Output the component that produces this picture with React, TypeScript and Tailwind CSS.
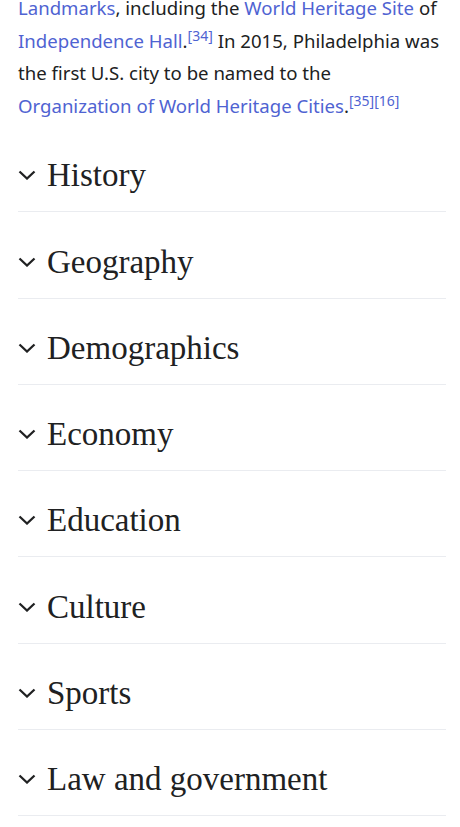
import React from "react";

const sections = [
  "History",
  "Geography",
  "Demographics",
  "Economy",
  "Education",
  "Culture",
  "Sports",
  "Law and government",
];

function Chevron() {
  return (
    <svg width="18" height="10" viewBox="0 0 18 10" className="shrink-0">
      <polyline
        points="1.5,1.5 9,8.5 16.5,1.5"
        fill="none"
        stroke="#202122"
        strokeWidth="2.3"
      />
    </svg>
  );
}

export default function App() {
  const link = "text-[#4f63d2]";
  const sup = "text-[14px] leading-none text-[#4f63d2]";
  return (
    <div className="bg-white w-[460px] h-[827px] overflow-hidden pl-[18px] pr-[14px]">
      <p
        className="-mt-[8px] text-[18.6px] leading-[32.5px] text-[#202122]"
        style={{ fontFamily: '"Noto Sans", "Open Sans", sans-serif' }}
      >
        <span className={link}>Landmarks</span>, including the{" "}
        <span className={link}>World Heritage Site</span> of{" "}
        <span className={link}>Independence Hall</span>.
        <sup className={sup}>[34]</sup> In 2015, Philadelphia was the first
        U.S. city to be named to the{" "}
        <span className={link}>Organization of World Heritage Cities</span>.
        <sup className={sup}>[35]</sup>
        <sup className={sup}>[16]</sup>
      </p>
      <div className="mt-[4px]">
        {sections.map((s) => (
          <div
            key={s}
            className="flex items-center gap-[11px] pt-[29.3px] pb-[16px] border-b border-[#eaecf0]"
          >
            <Chevron />
            <span
              className="text-[33px] leading-[40px] text-[#202122]"
              style={{ fontFamily: '"Liberation Serif", "DejaVu Serif", serif' }}
            >
              {s}
            </span>
          </div>
        ))}
      </div>
    </div>
  );
}
